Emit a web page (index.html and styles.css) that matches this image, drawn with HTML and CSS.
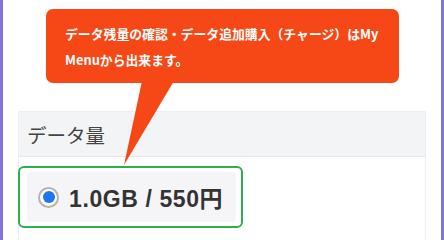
FILE: index.html
```html
<!DOCTYPE html>
<html lang="ja">
<head>
<meta charset="utf-8">
<link rel="stylesheet" href="styles.css">
</head>
<body>
<div class="frame">
  <div class="callout">
    <p class="callout-text">データ残量の確認・データ追加購入（チャージ）はMy Menuから出来ます。</p>
    <svg class="tail" width="70" height="86" viewBox="0 0 70 86"><polygon points="26,0 58,0 8,84" fill="#f64816"/></svg>
  </div>
  <div class="panel">
    <div class="panel-head">データ量</div>
    <div class="panel-body">
      <div class="highlight">
        <label class="option"><span class="radio"><span class="dot"></span></span><span class="opt-text">1.0GB / 550円</span></label>
      </div>
    </div>
  </div>
</div>
</body>
</html>
```

FILE: styles.css
```css
html, body {
  margin: 0;
  padding: 0;
  background: #ffffff;
}
.frame {
  box-sizing: border-box;
  height: 240px;
  border-left: 3px solid #8174df;
  border-right: 3px solid #8174df;
  padding-top: 9px;
  overflow: hidden;
  background: #ffffff;
  font-family: "Noto Sans CJK JP", "Noto Sans", sans-serif;
}
.callout {
  position: relative;
  z-index: 2;
  box-sizing: border-box;
  margin-left: 43px;
  width: 353px;
  padding: 12px 8px 10px 19px;
  border-radius: 7px;
  background: #f64816;
  color: #ffffff;
}
.callout-text {
  margin: 0;
  font-size: 12.85px;
  font-weight: 700;
  line-height: 26px;
}
.tail {
  position: absolute;
  left: 70px;
  top: 72px;
}
.panel {
  margin-top: 28px;
  margin-left: 15px;
  width: 408px;
  box-sizing: border-box;
  border: 1px solid #eceef1;
  border-bottom: none;
  height: 140px;
}
.panel-head {
  box-sizing: border-box;
  height: 45px;
  padding-left: 8px;
  display: flex;
  align-items: center;
  background: #f3f4f6;
  border-bottom: 1px solid #e6e8eb;
  font-size: 19.5px;
  color: #444444;
}
.panel-body {
  padding-top: 9px;
}
.highlight {
  box-sizing: border-box;
  margin-left: -1px;
  width: 225px;
  height: 62px;
  border: 2px solid #2fae4f;
  border-radius: 6px;
  padding: 4px 5px 4px 7px;
}
.option {
  display: flex;
  align-items: center;
  height: 100%;
  padding-left: 11px;
  border-radius: 4px;
  background: #f5f5f7;
}
.radio {
  box-sizing: border-box;
  width: 21px;
  height: 21px;
  border-radius: 50%;
  border: 2px solid #b3b3b3;
  background: #ffffff;
  display: flex;
  align-items: center;
  justify-content: center;
  flex: none;
}
.dot {
  width: 12px;
  height: 12px;
  border-radius: 50%;
  background: #1f75ef;
}
.opt-text {
  margin-left: 10px;
  font-family: "Liberation Sans", "Noto Sans CJK JP", sans-serif;
  font-weight: 700;
  font-size: 23px;
  letter-spacing: 0.6px;
  color: #333333;
}
```
